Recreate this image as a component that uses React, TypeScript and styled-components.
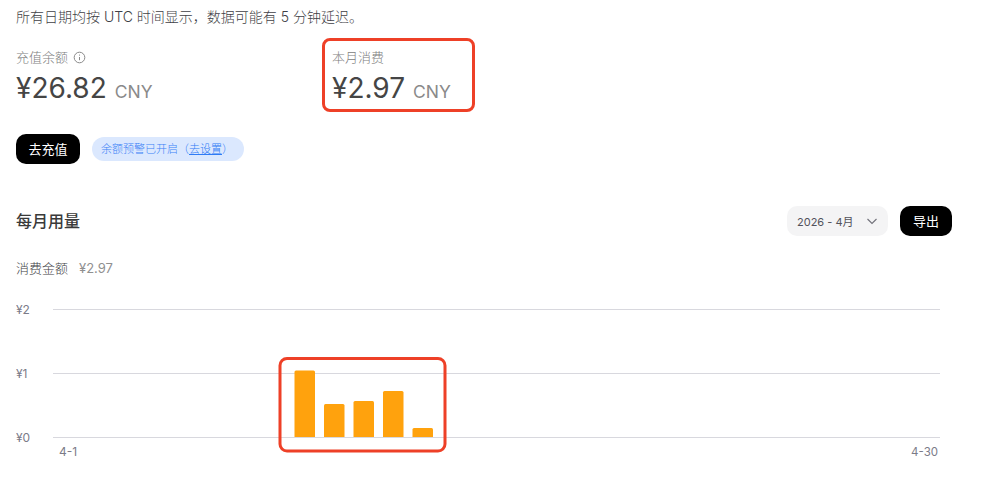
import React from "react";
import styled, { createGlobalStyle } from "styled-components";

const Global = createGlobalStyle`
  html, body { margin: 0; padding: 0; background: #fff; }
  body { font-family: Inter, "Noto Sans CJK SC", sans-serif; overflow: hidden; }
`;
const Page = styled.div`
  width: 936px; height: 486px; padding: 0 44px 0 16px; display: flex; flex-direction: column;
`;
const Notice = styled.p`
  margin: 0; padding-top: 6px; font-size: 14px; line-height: 21px; color: #3f3f46; font-weight: 300;
`;
const Stats = styled.div`
  display: flex; margin-top: 20px;
`;
const Stat = styled.div<{ $w: number }>`
  position: relative; width: ${(p) => p.$w}px; height: 66px;
`;
const StatLabel = styled.div`
  display: flex; align-items: center; gap: 5px; font-size: 13px; line-height: 20px; color: #808080; font-weight: 300;
`;
const Amount = styled.div`
  margin-top: 1px; font-size: 28px; line-height: 40px; color: #454545; white-space: nowrap;
`;
const Unit = styled.span`
  font-size: 17.5px; color: #8a8a8a; margin-left: 8px;
`;
const Highlight = styled.div`
  position: absolute; left: -10px; top: -9px; width: 153px; height: 74px; box-sizing: border-box;
  border: 3px solid #ee4027; border-radius: 8px;
`;
const Actions = styled.div`
  display: flex; align-items: center; gap: 12px; margin-top: 21px;
`;
const DarkButton = styled.button<{ $w: number }>`
  width: ${(p) => p.$w}px; height: 30px; padding: 1px 0 0; border: 0; border-radius: 10px; background: #000; color: #fff;
  font-family: inherit; font-size: 13px; line-height: 29px;
`;
const Pill = styled.div`
  height: 24px; width: 152px; box-sizing: border-box; padding-left: 9px; border-radius: 12px; background: #dbe8fe; color: #3b82f6;
  font-size: 11px; line-height: 24px; white-space: nowrap; font-weight: 300;
`;
const PillLink = styled.span`
  text-decoration: underline; color: #2f7bf5;
`;
const HeadRow = styled.div`
  display: flex; align-items: center; justify-content: space-between; margin-top: 42px; height: 30px;
`;
const Heading = styled.h2`
  margin: -2px 0 0; font-size: 16px; font-weight: 500; color: #3a3a3a;
`;
const Controls = styled.div`
  display: flex; align-items: center; gap: 12px;
`;
const Select = styled.div`
  display: flex; align-items: center; justify-content: space-between; box-sizing: border-box;
  width: 101px; height: 30px; padding: 0 10px; border-radius: 10px; background: #f4f4f5;
  font-size: 11px; color: #52525b;
`;
const Sub = styled.div`
  display: flex; gap: 11px; margin-top: 22px; font-size: 13px; line-height: 20px; color: #3f3f46; font-weight: 300;
`;
const SubValue = styled.span`
  color: #909090; font-size: 13px; font-weight: 400;
`;
const Chart = styled.svg`
  display: block; margin-top: 17px; width: 936px; height: 170px; font-family: Inter, "Noto Sans CJK SC", sans-serif;
`;

const bars = [
  { x: 278.5, top: 75.5 },
  { x: 308, top: 109 },
  { x: 337.5, top: 106 },
  { x: 367, top: 96 },
  { x: 396.5, top: 133 },
];
const base = 142;
const axis = [
  { label: "¥2", y: 14 },
  { label: "¥1", y: 78 },
  { label: "¥0", y: 142 },
];

export default function App() {
  return (
    <Page>
      <Global />
      <Notice>所有日期均按 UTC 时间显示，数据可能有 5 分钟延迟。</Notice>
      <Stats>
        <Stat $w={316}>
          <StatLabel>
            充值余额
            <svg width="13" height="13" viewBox="0 0 13 13" fill="none" stroke="#8a8a8a" strokeWidth="1">
              <circle cx="6.5" cy="6.5" r="5.3" />
              <path d="M6.5 6v3.2M6.5 3.6v1" />
            </svg>
          </StatLabel>
          <Amount>¥26.82<Unit>CNY</Unit></Amount>
        </Stat>
        <Stat $w={151}>
          <Highlight />
          <StatLabel>本月消费</StatLabel>
          <Amount>¥2.97<Unit>CNY</Unit></Amount>
        </Stat>
      </Stats>
      <Actions>
        <DarkButton $w={64}>去充值</DarkButton>
        <Pill>余额预警已开启（<PillLink>去设置</PillLink>）</Pill>
      </Actions>
      <HeadRow>
        <Heading>每月用量</Heading>
        <Controls>
          <Select>
            2026 - 4月
            <svg width="12" height="12" viewBox="0 0 12 12" fill="none" stroke="#71717a" strokeWidth="1.1">
              <path d="M1.5 4l4.5 4.5L10.5 4" />
            </svg>
          </Select>
          <DarkButton $w={52}>导出</DarkButton>
        </Controls>
      </HeadRow>
      <Sub>消费金额<SubValue>¥2.97</SubValue></Sub>
      <Chart viewBox="0 0 936 170">
        {axis.map((a) => (
          <g key={a.label}>
            <line x1="37" x2="924" y1={a.y + 0.5} y2={a.y + 0.5} stroke="#d8d8de" />
            <text x="0" y={a.y + 4.5} fontSize="12" fill="#7b7b88">{a.label}</text>
          </g>
        ))}
        {bars.map((b) => (
          <path
            key={b.x}
            d={`M${b.x} ${base}V${b.top + 1.5}a1.5 1.5 0 0 1 1.5 -1.5H${b.x + 19}a1.5 1.5 0 0 1 1.5 1.5V${base}Z`}
            fill="#ffa20d"
          />
        ))}
        <rect x="264" y="63.5" width="165" height="92.5" rx="7" fill="none" stroke="#ee4027" strokeWidth="3" />
        <text x="43" y="160.5" fontSize="12" fill="#7b7b88">4-1</text>
        <text x="922" y="160.5" fontSize="11.5" fill="#7b7b88" textAnchor="end">4-30</text>
      </Chart>
    </Page>
  );
}
